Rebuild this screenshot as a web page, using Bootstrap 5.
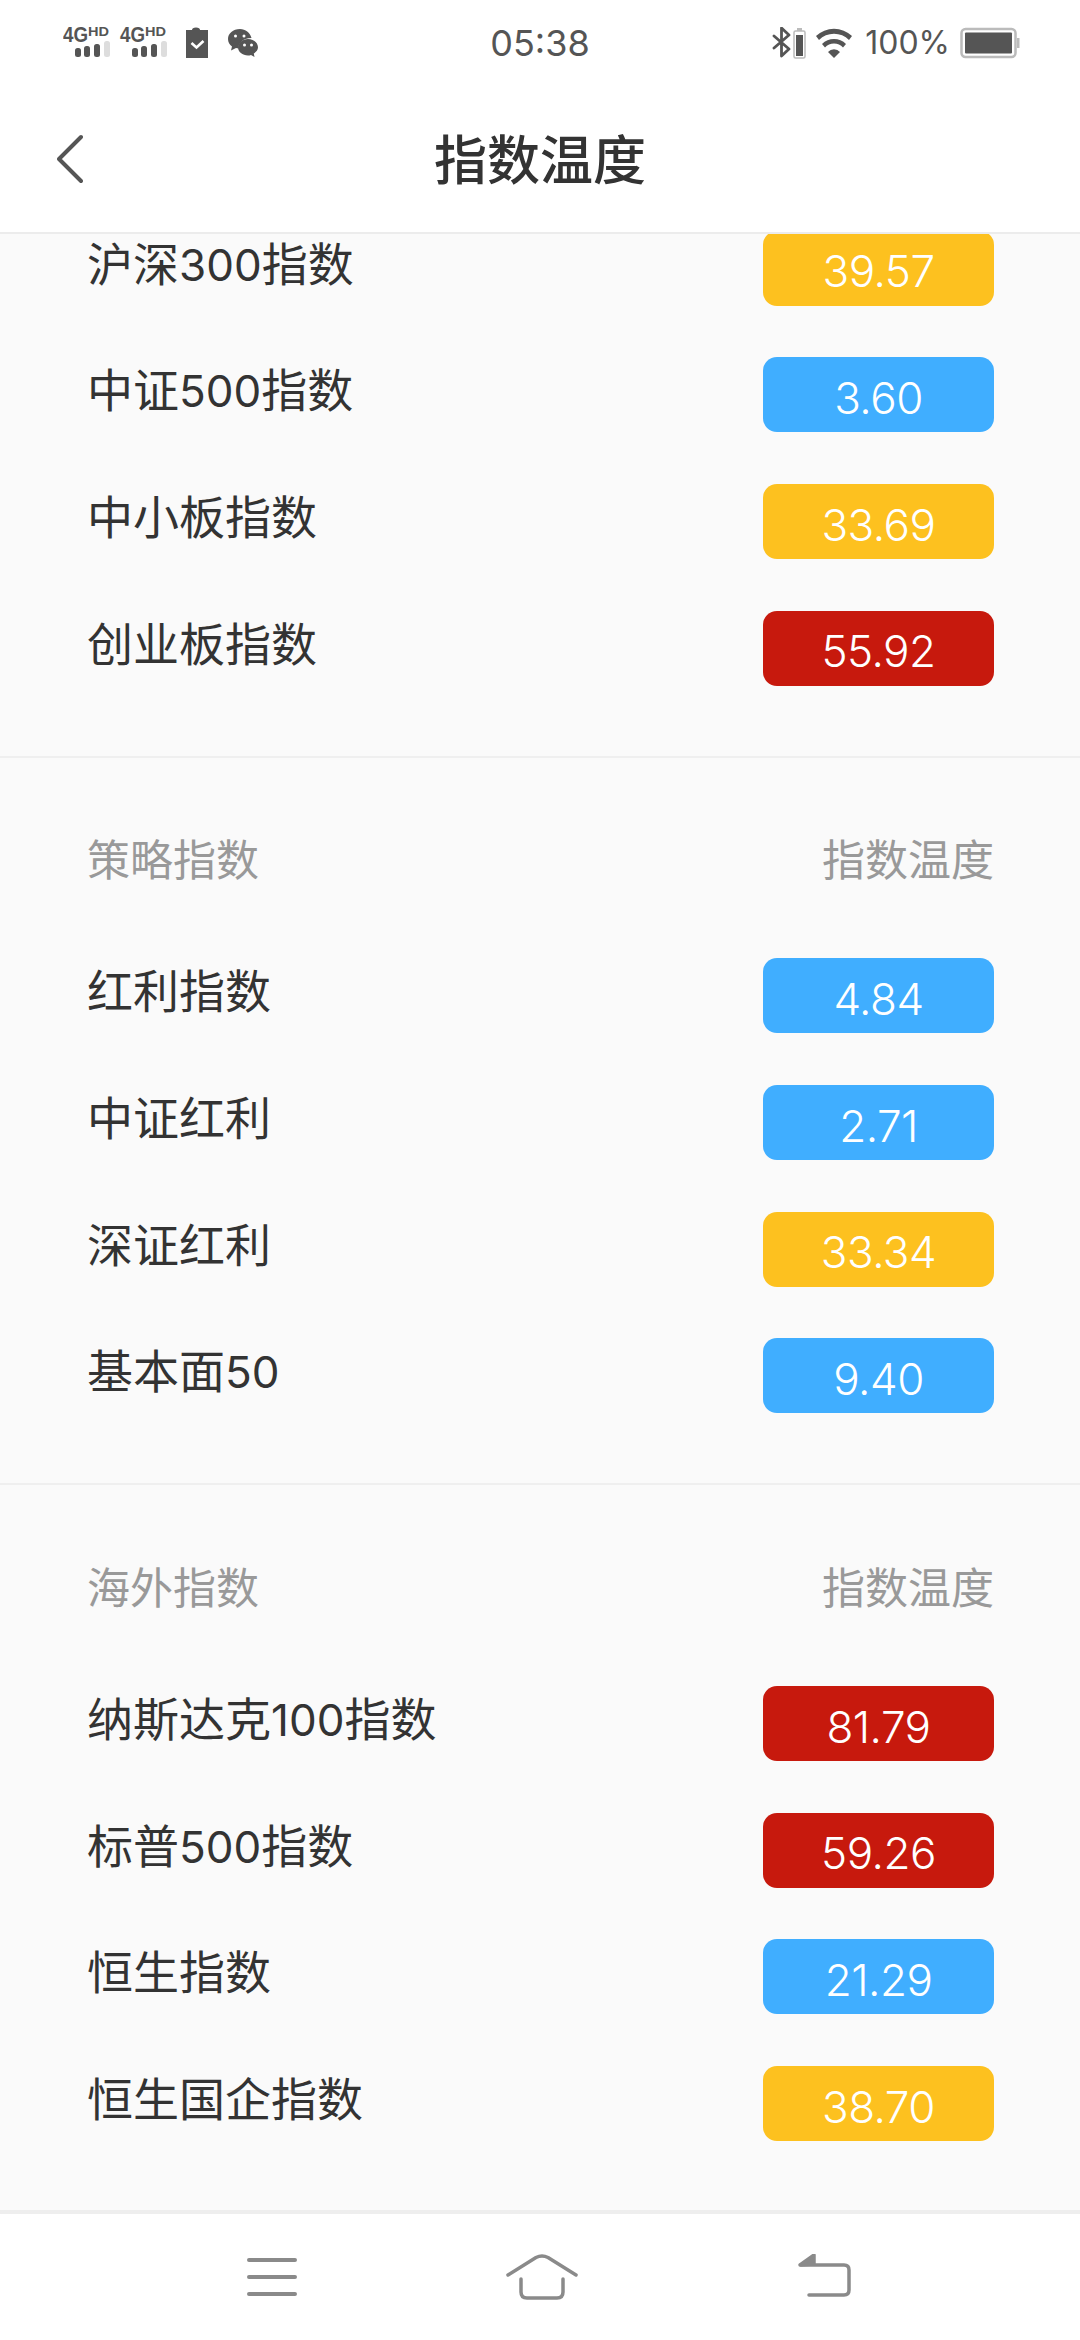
<!DOCTYPE html>
<html lang="zh-CN">
<head>
<meta charset="utf-8">
<title>指数温度</title>
<link href="https://cdn.jsdelivr.net/npm/bootstrap@5.3.0/dist/css/bootstrap.min.css" rel="stylesheet">
<style>
html,body{margin:0;background:#fafafa}
body{font-family:Roboto,"Noto Sans CJK SC",sans-serif;color:#333}
.app-shell{width:1080px;height:2340px;overflow:hidden}
.status-strip{height:85px;background:#fff;color:#555;padding:0 60px 0 63px;font-family:Inter,sans-serif}
.status-time{font-size:36px;line-height:1;width:100%;text-align:center}
.status-side{width:400px;flex:none}
.status-pct{font-size:32px;line-height:1;margin:0 10px 0 12px}
.title-bar{height:149px;background:#fff;border-bottom:2px solid #ececec;padding-left:57px}
.title-text{flex:1 1 0;font-size:53px;font-weight:500;line-height:1;color:#333;text-align:center;margin-left:-83px;padding-top:8px}
.scroll-area{flex:1 1 0;min-height:0;overflow:hidden;background:#fafafa}
.first-group{margin-top:-29px}
.index-group{padding:0 86px 44px 87px;border-bottom:2px solid #efefef}
.group-head{height:175px;padding-top:33px;font-size:43px;color:#999;line-height:1}
.index-row{height:126.67px}
.index-name{font-size:46px;line-height:1;padding-bottom:7px;color:#333}
.num-run{font-family:Inter,sans-serif;font-size:44px}
.temp-pill{width:231px;height:75px;border-radius:14px;color:#fff;font-family:Inter,sans-serif;font-weight:300;font-size:44px;letter-spacing:-.5px;line-height:1;padding-top:6px}
.temp-cold{background:#40aeff}
.temp-mid{background:#fdc11f}
.temp-hot{background:#c7190d}
.bottom-bar{height:130px;background:#fff;border-top:4px solid #eee;padding-top:40px;padding-left:247px}
.nav-home{margin-left:209px}
.nav-back{margin-left:220px}
</style>
</head>
<body>
<div class="app-shell d-flex flex-column">
  <div class="status-strip d-flex align-items-center justify-content-between position-relative">
    <div class="status-side d-flex align-items-center">
      <svg width="200" height="40" viewBox="0 0 200 40" fill="#555">
        <text x="0" y="19" font-family="Liberation Sans" font-weight="700" font-size="22" textLength="25" lengthAdjust="spacingAndGlyphs">4G</text>
        <text x="25" y="13" font-family="Liberation Sans" font-weight="700" font-size="13" textLength="21" lengthAdjust="spacingAndGlyphs">HD</text>
        <rect x="12" y="25" width="6" height="9" rx="2.500"/><rect x="21" y="23" width="6" height="11" rx="2.500"/><rect x="31" y="21" width="6" height="13" rx="2.500"/><rect x="41" y="18" width="6" height="16" rx="2.500" fill="#ddd"/>
        <text x="57" y="19" font-family="Liberation Sans" font-weight="700" font-size="22" textLength="25" lengthAdjust="spacingAndGlyphs">4G</text>
        <text x="82" y="13" font-family="Liberation Sans" font-weight="700" font-size="13" textLength="21" lengthAdjust="spacingAndGlyphs">HD</text>
        <rect x="69" y="25" width="6" height="9" rx="2.500"/><rect x="78" y="23" width="6" height="11" rx="2.500"/><rect x="88" y="21" width="6" height="13" rx="2.500"/><rect x="98" y="18" width="6" height="16" rx="2.500" fill="#ddd"/>
        <path d="M123 7h6a4 2.500 0 0 1 8 0h8v28h-22z"/>
        <path d="M128.500 20l5 4.500 7-6.500" fill="none" stroke="#fff" stroke-width="2.600"/>
        <g transform="translate(0 5)">
          <path d="M177 1c-7 0-12 4.500-12 10 0 3 1.500 5.500 4 7.500l-1 4 5-2.500c1 .3 1.600.4 2.500.5-.5-5 4-10.500 13-10.500C187 4.500 182.500 1 177 1z"/>
          <circle cx="172.500" cy="8" r="1.500" fill="#fff"/><circle cx="181" cy="8" r="1.500" fill="#fff"/>
          <path d="M185 11c-5.500 0-10 3.600-10 8.300S179.500 27.500 185 27.500c1.200 0 2-.1 3-.5l3.500 2-.7-3.500c2.500-1.500 4.200-3.500 4.200-6.200 0-4.700-4.500-8.300-10-8.300z"/>
          <circle cx="181.500" cy="17" r="1.500" fill="#fff"/><circle cx="188.500" cy="17" r="1.500" fill="#fff"/>
        </g>
      </svg>
    </div>
    <div class="status-time position-absolute start-0 top-50 translate-middle-y">05:38</div>
    <div class="d-flex align-items-center">
      <svg width="81" height="32" viewBox="0 0 81 32" fill="none">
        <path d="M2 9l15 13-7.500 7V1l7.500 7L2 21" stroke="#555" stroke-width="2.800" stroke-linejoin="round" stroke-linecap="round"/>
        <rect x="22" y="4" width="11" height="27" rx="1.500" stroke="#bbb" stroke-width="1.500"/>
        <rect x="25" y="1" width="5" height="3" fill="#bbb"/>
        <rect x="24" y="8" width="7" height="21" fill="#555"/>
        <path d="M44 9a26 26 0 0 1 36 0l-3 4a21 21 0 0 0-30 0z" fill="#555"/>
        <path d="M50 17a17 17 0 0 1 24 0l-3 3.500a12 12 0 0 0-18 0z" fill="#555"/>
        <path d="M56 25a8 8 0 0 1 12 0l-6 6z" fill="#555"/>
      </svg>
      <span class="status-pct">100%</span>
      <svg width="60" height="32" viewBox="0 0 60 32">
        <rect x="1.500" y="2" width="54" height="28" rx="4" fill="none" stroke="#bbb" stroke-width="2.500"/>
        <rect x="5" y="5.500" width="47" height="21" rx="1" fill="#555"/>
        <rect x="57" y="11" width="2.500" height="10" fill="#bbb"/>
      </svg>
    </div>
  </div>

  <div class="title-bar d-flex align-items-center">
    <svg class="flex-shrink-0" width="26" height="50" viewBox="0 0 26 50" fill="none">
      <path d="M24 3L2 25l22 22" stroke="#555" stroke-width="4" stroke-linecap="round" stroke-linejoin="round"/>
    </svg>
    <div class="title-text">指数温度</div>
  </div>

  <main class="scroll-area">
    <section class="index-group first-group">
      <div class="index-row d-flex align-items-center justify-content-between"><span class="index-name">沪深<span class="num-run">300</span>指数</span><span class="temp-pill temp-mid d-flex align-items-center justify-content-center">39.57</span></div>
      <div class="index-row d-flex align-items-center justify-content-between"><span class="index-name">中证<span class="num-run">500</span>指数</span><span class="temp-pill temp-cold d-flex align-items-center justify-content-center">3.60</span></div>
      <div class="index-row d-flex align-items-center justify-content-between"><span class="index-name">中小板指数</span><span class="temp-pill temp-mid d-flex align-items-center justify-content-center">33.69</span></div>
      <div class="index-row d-flex align-items-center justify-content-between"><span class="index-name">创业板指数</span><span class="temp-pill temp-hot d-flex align-items-center justify-content-center">55.92</span></div>
    </section>
    <section class="index-group">
      <div class="group-head d-flex align-items-center justify-content-between"><span>策略指数</span><span>指数温度</span></div>
      <div class="index-row d-flex align-items-center justify-content-between"><span class="index-name">红利指数</span><span class="temp-pill temp-cold d-flex align-items-center justify-content-center">4.84</span></div>
      <div class="index-row d-flex align-items-center justify-content-between"><span class="index-name">中证红利</span><span class="temp-pill temp-cold d-flex align-items-center justify-content-center">2.71</span></div>
      <div class="index-row d-flex align-items-center justify-content-between"><span class="index-name">深证红利</span><span class="temp-pill temp-mid d-flex align-items-center justify-content-center">33.34</span></div>
      <div class="index-row d-flex align-items-center justify-content-between"><span class="index-name">基本面<span class="num-run">50</span></span><span class="temp-pill temp-cold d-flex align-items-center justify-content-center">9.40</span></div>
    </section>
    <section class="index-group">
      <div class="group-head d-flex align-items-center justify-content-between"><span>海外指数</span><span>指数温度</span></div>
      <div class="index-row d-flex align-items-center justify-content-between"><span class="index-name">纳斯达克<span class="num-run">100</span>指数</span><span class="temp-pill temp-hot d-flex align-items-center justify-content-center">81.79</span></div>
      <div class="index-row d-flex align-items-center justify-content-between"><span class="index-name">标普<span class="num-run">500</span>指数</span><span class="temp-pill temp-hot d-flex align-items-center justify-content-center">59.26</span></div>
      <div class="index-row d-flex align-items-center justify-content-between"><span class="index-name">恒生指数</span><span class="temp-pill temp-cold d-flex align-items-center justify-content-center">21.29</span></div>
      <div class="index-row d-flex align-items-center justify-content-between"><span class="index-name">恒生国企指数</span><span class="temp-pill temp-mid d-flex align-items-center justify-content-center">38.70</span></div>
    </section>
  </main>

  <nav class="bottom-bar d-flex align-items-start">
    <svg width="50" height="44" viewBox="0 0 50 44" fill="none" stroke="#8a8a8a" stroke-width="4" stroke-linecap="round">
      <path d="M2 6h46M2 23h46M2 40h46"/>
    </svg>
    <svg class="nav-home" width="72" height="46" viewBox="0 0 72 46" fill="none" stroke="#8a8a8a" stroke-width="3.500" stroke-linecap="round" stroke-linejoin="round">
      <path d="M2 21L30 3.500q6-3 12 0L70 21"/>
      <path d="M15 25v13q0 6 6 6h30q6 0 6-6V25"/>
    </svg>
    <svg class="nav-back" width="54" height="44" viewBox="0 0 54 44" fill="none" stroke="#8a8a8a" stroke-width="3.500" stroke-linecap="round" stroke-linejoin="round">
      <path d="M2 11L16 1v9z" fill="#8a8a8a"/>
      <path d="M3 11h43q5 0 5 5v20q0 5-5 5H11"/>
    </svg>
  </nav>
</div>
<script src="https://cdn.jsdelivr.net/npm/bootstrap@5.3.0/dist/js/bootstrap.bundle.min.js"></script>
</body>
</html>
